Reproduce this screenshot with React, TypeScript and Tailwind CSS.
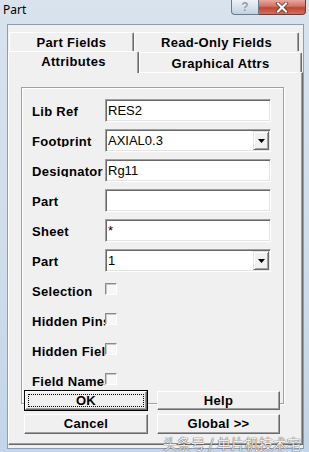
import type { ReactNode } from "react";

const sans = "font-['Liberation_Sans',Arial,sans-serif]";

const raised =
  "border border-t-white border-l-white border-b-[#696969] border-r-[#696969] shadow-[inset_-1px_-1px_0_#a0a0a0]";
const sunken =
  "border border-t-[#a0a0a0] border-l-[#a0a0a0] border-b-white border-r-white shadow-[inset_1px_1px_0_#696969,inset_-1px_-1px_0_#e3e3e3]";

function Label({ text }: { text: string }) {
  return (
    <div className="w-[73px] h-[13px] shrink-0 overflow-hidden whitespace-nowrap text-[13px] leading-[15px] font-bold tracking-[0.3px] text-black">
      {text}
    </div>
  );
}

function Field({ label, value, combo }: { label: string; value: string; combo?: boolean }) {
  return (
    <div className="h-[30px] flex items-start">
      <div className="h-[23px] flex items-center">
        <Label text={label} />
      </div>
      <div className={`w-[166px] h-[23px] bg-white flex ${sunken}`}>
        <div className="flex-1 pl-[2px] text-[13px] leading-[21px] text-black whitespace-nowrap overflow-hidden">
          {value}
        </div>
        {combo && (
          <div className="m-[1px] w-[16px] bg-[#f0f0f0] flex items-center justify-center border border-t-[#e3e3e3] border-l-[#e3e3e3] border-b-[#696969] border-r-[#696969] shadow-[inset_1px_1px_0_#fff,inset_-1px_-1px_0_#a0a0a0]">
            <svg width="7" height="4" viewBox="0 0 7 4">
              <polygon points="0,0 7,0 3.5,4" fill="#000" />
            </svg>
          </div>
        )}
      </div>
    </div>
  );
}

function Check({ label }: { label: string }) {
  return (
    <div className="h-[30px] flex items-start">
      <div className="mt-[5px]">
        <Label text={label} />
      </div>
      <div className="mt-[4px] w-[12px] h-[12px] bg-[#f7f7f7] border border-t-[#8a8a8a] border-l-[#8a8a8a] border-b-white border-r-white shadow-[inset_1px_1px_0_#c8c8c8]" />
    </div>
  );
}

function Btn({ children, w, h = 19 }: { children: ReactNode; w: number; h?: number }) {
  return (
    <div
      className={`${raised} bg-[#f0f0f0] flex items-center justify-center text-[13px] font-bold tracking-[0.3px] text-black`}
      style={{ width: w, height: h }}
    >
      {children}
    </div>
  );
}

function Tab({ label, w, h, extra = "" }: { label: string; w: number; h: number; extra?: string }) {
  return (
    <div
      className={`bg-[#f0f0f0] border-t border-l border-r border-t-white border-l-white border-r-[#696969] shadow-[inset_-1px_0_0_#a0a0a0] rounded-tr-[2px] rounded-tl-[1px] flex justify-center text-[13px] font-bold tracking-[0.3px] text-black ${extra}`}
      style={{ width: w, height: h }}
    >
      {label}
    </div>
  );
}

export default function App() {
  return (
    <div
      className={`w-[309px] h-[452px] relative overflow-hidden flex flex-col bg-[linear-gradient(180deg,#d8e3ee_0%,#cfdcea_60%,#c3d5ea_100%)] ${sans}`}
    >
      {/* title bar */}
      <div className="h-[24px] shrink-0 flex items-start">
        <span className="ml-[3px] mt-[2px] text-[12px] leading-[16px] text-black font-['Noto_Sans',sans-serif]">
          Part
        </span>
        <div className="ml-auto mr-[3px] flex h-[15px]">
          <div className="w-[28px] h-full rounded-bl-[4px] border border-t-0 border-[#6b7b8f] bg-[linear-gradient(180deg,#edf2f7_0%,#d9e2ec_50%,#c3cfdc_100%)] flex items-center justify-center">
            <span className="text-[12px] leading-[12px] font-bold text-[#8a9bb0] [text-shadow:0_0_1px_#fff]">
              ?
            </span>
          </div>
          <div className="w-[47px] h-full rounded-br-[4px] border border-t-0 border-l-0 border-[#6b3a36] bg-[linear-gradient(180deg,#e7a89e_0%,#d27163_45%,#c1442f_55%,#d3715f_100%)] flex items-center justify-center">
            <svg width="14" height="11" viewBox="0 0 14 11">
              <path d="M3 1.5 L11 9.5 M11 1.5 L3 9.5" stroke="#5a2a24" strokeWidth="3.6" strokeLinecap="square" />
              <path d="M3 1.5 L11 9.5 M11 1.5 L3 9.5" stroke="#fff" strokeWidth="2.2" strokeLinecap="square" />
            </svg>
          </div>
        </div>
      </div>

      {/* client area */}
      <div className="ml-[7px] w-[297px] h-[425px] shrink-0 border border-[#8e9db0] bg-[#f0f0f0] flex flex-col">
        <div className="mt-[7px] h-[19px] flex pl-[1px]">
          <Tab label="Part Fields" w={125} h={19} extra="leading-[19px]" />
          <Tab label="Read-Only Fields" w={165} h={19} extra="leading-[19px]" />
        </div>
        <div className="h-[21px] flex items-start">
          <Tab label="Attributes" w={131} h={22} extra="relative z-10 leading-[18px] pt-[1px]" />
          <Tab label="Graphical Attrs" w={163} h={20} extra="mt-[1px] leading-[19px] pt-[1px]" />
        </div>

        {/* tab page */}
        <div className="w-[295px] h-[373px] border border-t-white border-l-white border-r-[#696969] border-b-[#696969] shadow-[inset_-1px_-1px_0_#a0a0a0] flex flex-col">
          <div className="mt-[14px] ml-[12px] w-[263px] h-[317px] shrink-0 border border-[#a0a0a0] shadow-[inset_1px_1px_0_#fff,1px_1px_0_#fff] pt-[11px] pl-[10px]">
            <Field label="Lib Ref" value="RES2" />
            <Field label="Footprint" value="AXIAL0.3" combo />
            <Field label="Designator" value="Rg11" />
            <Field label="Part" value="" />
            <Field label="Sheet" value="*" />
            <Field label="Part" value="1" combo />
            <Check label="Selection" />
            <Check label="Hidden Pins" />
            <Check label="Hidden Fields" />
            <Check label="Field Names" />
          </div>

          <div className="-mt-[14px] ml-[15px] relative flex flex-col">
            <div className="h-[21px] flex items-center gap-[9px]">
              <div className="w-[124px] h-[21px] border border-black">
                <div className={`w-full h-full ${raised} bg-[#f0f0f0] p-[2px]`}>
                  <div className="w-full h-full border border-dotted border-black flex items-center justify-center text-[13px] font-bold tracking-[0.3px] text-black leading-none">
                    OK
                  </div>
                </div>
              </div>
              <Btn w={123}>Help</Btn>
            </div>
            <div className="mt-[3px] flex gap-[9px]">
              <Btn w={124} h={20}>
                Cancel
              </Btn>
              <Btn w={123} h={20}>
                Global &gt;&gt;
              </Btn>
            </div>
          </div>
        </div>
      </div>

      {/* watermark */}
      <div className="absolute left-[163px] top-[434px] text-[14px] leading-[18px] text-white/90 [text-shadow:0_0_1px_#4a4a4a,0_0_1px_#4a4a4a] font-['Noto_Sans_CJK_SC',sans-serif] whitespace-nowrap">
        头条号 / 单片机技术宅
      </div>
    </div>
  );
}
